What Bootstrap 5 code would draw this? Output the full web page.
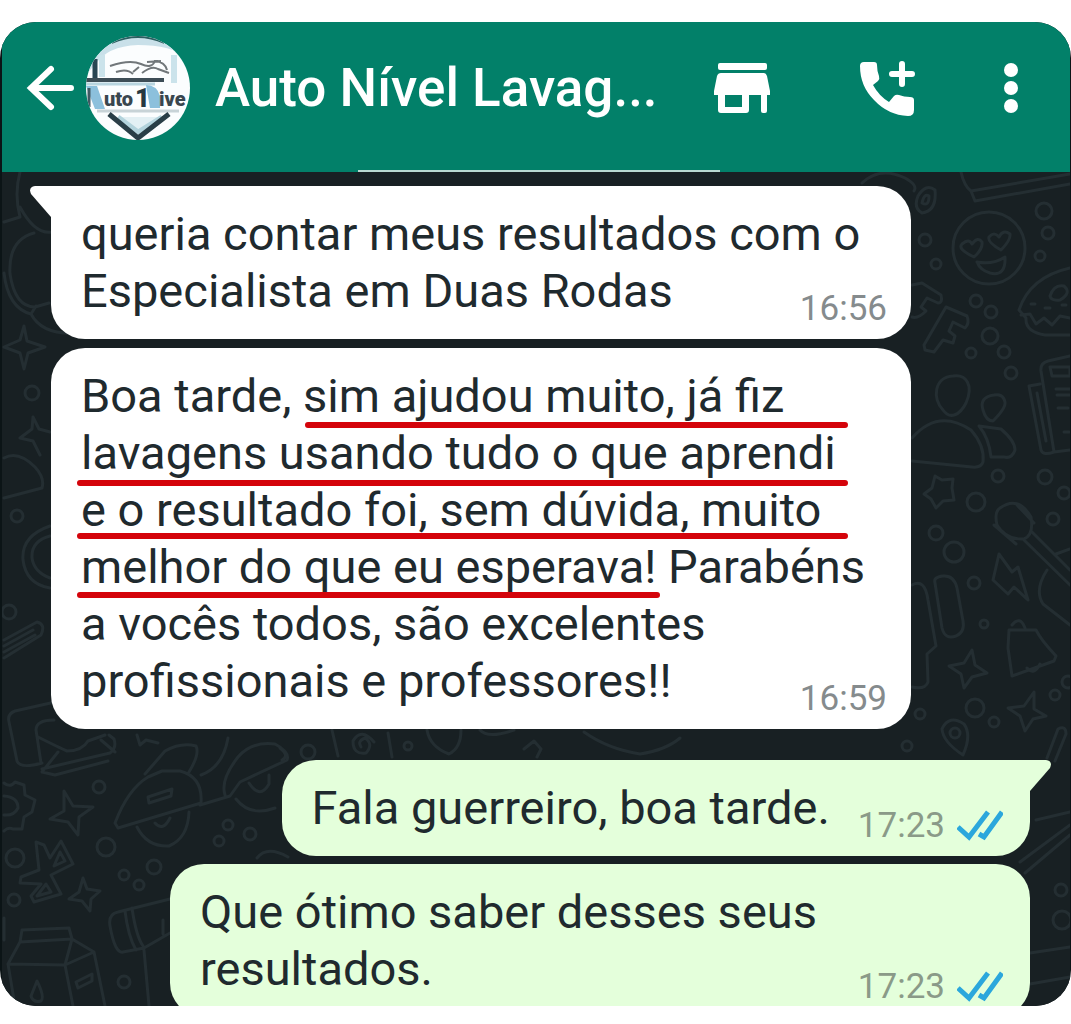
<!DOCTYPE html>
<html lang="pt-BR">
<head>
<meta charset="utf-8">
<meta name="viewport" content="width=device-width, initial-scale=1">
<title>Auto Nível Lavagens</title>
<link href="https://cdn.jsdelivr.net/npm/bootstrap@5.3.0/dist/css/bootstrap.min.css" rel="stylesheet">
<style>
body{background:#fff;font-family:Roboto,"Noto Sans",sans-serif;color:#1f2a2e}
.phone{margin:22px 0 18px;padding:0 1px 0 2px;border-radius:36px;background:#0b1416}
.topbar{height:150px;padding:0 30px 18px 21px;background:#028069;color:#fff}
.topbar .tap{color:#fff;background:none;border:0;padding:0;line-height:0}
.topbar .call{margin-left:87px}
.topbar .more{margin-left:66px}
.contact{font-size:53px;line-height:60px;font-weight:500;margin:0 0 0 24px}
.handle{bottom:-1px;left:356px;width:362px;height:3px;background:#b9d9d1}
.chat{height:834px;background:#182023;padding:14px 40px 0 49px}
.doodles{inset:0;width:100%;height:100%;fill:none;stroke:#242e32;stroke-width:3;stroke-linecap:round;stroke-linejoin:round}
.bubble{position:relative;display:grid;width:860px;max-width:100%;flex-shrink:0;padding:19px 24px 20px 30px;border-radius:34px;background:#fff;font-size:47px;line-height:57px}
.bubble p{margin:0;grid-area:1/1}
.bubble .stamp{grid-area:1/1;align-self:end;justify-self:end}
.bubble.sent{background:#e4ffdb;align-self:flex-end;padding-right:27px}
.bubble.short{width:auto;column-gap:28px;margin-top:31px}
.bubble.short .stamp{grid-area:1/2}
.bubble.long{margin-top:9px}
.bubble.last{margin-top:8px}
.head-in{border-top-left-radius:0}
.head-out{border-top-right-radius:0}
.tail{top:0;width:23px;height:32px}
.tail-in{left:-21px;fill:#fff}
.tail-out{right:-21px;fill:#e4ffdb}
.stamp{display:flex;align-items:center;gap:12px;font-size:35px;line-height:41px;color:#858b8d;margin-bottom:-10px}
.sent .stamp{color:#8a9a88}
.marks{left:0;top:0;width:860px;height:381px;stroke:#d4040b;stroke-width:6;stroke-linecap:round}
</style>
</head>
<body>
<main class="phone overflow-hidden">
<header class="topbar d-flex align-items-center position-relative">
  <button class="tap" aria-label="Voltar"><svg width="54" height="54" viewBox="0 0 54 54" fill="none" stroke="#fff" stroke-width="6" stroke-linecap="round"><path d="M8 27H48M28 8L8 27L28 46"/></svg></button>
  <svg class="ms-2" width="106" height="106" viewBox="0 0 106 106" role="img" aria-label="Auto Nível">
    <defs><clipPath id="face"><circle cx="53" cy="53" r="52"/></clipPath></defs>
    <g clip-path="url(#face)">
      <rect width="106" height="106" fill="#fbfdfe"/>
      <path d="M0 0H106V24Q86 10 53 10Q22 11 10 30L0 40Z" fill="#c9e0e9"/>
      <path d="M26 6Q53-6 80 6" stroke="#2b5f60" stroke-width="6" fill="none"/>
      <path d="M10 24V44" stroke="#294552" stroke-width="5"/><path d="M17 20V42M89 20V48" stroke="#cbe3eb" stroke-width="6"/>
      <path d="M0 45H79" stroke="#3d4d56" stroke-width="4"/><path d="M0 49H70" stroke="#b8d5df" stroke-width="3"/>
      <path d="M25 31Q45 24 56 29T70 26Q80 27 82 35M31 37Q42 33 48 39M54 32L48 37M57 38Q67 30 73 34L84 38M62 27L76 26" fill="none" stroke="#71777a" stroke-width="2"/>
      <path d="M1 51H12L20 74H10Z" fill="#8cc0dc"/><path d="M4 53V72" stroke="#415963" stroke-width="3"/>
      <path d="M61 50Q72 50 75 61V73H65Z" fill="#8cc0dc"/>
      <text x="19" y="71" font-family="Roboto,sans-serif" font-size="20" font-weight="900" fill="#39464e">uto</text>
      <text x="50" y="72" font-family="Roboto,sans-serif" font-size="26" font-weight="900" fill="#263941">1</text>
      <text x="74" y="71" font-family="Roboto,sans-serif" font-size="20" font-weight="900" fill="#39464e">ive</text>
      <path d="M12 76H94" stroke="#c8d3d7" stroke-width="3"/>
      <path d="M33 82L53 97L77 82" fill="#e3f0f4" stroke="#b3d3dc" stroke-width="5"/>
      <path d="M24 79L53 103L84 79" fill="none" stroke="#293e47" stroke-width="5"/>
    </g>
  </svg>
  <h1 class="contact text-nowrap">Auto Nível Lavag...</h1>
  <div class="d-flex align-items-center ms-auto">
    <button class="tap" aria-label="Loja"><svg width="58" height="54" viewBox="0 0 58 54" fill="#fff"><rect x="5" y="2" width="49" height="7" rx="2"/><path fill-rule="evenodd" d="M8 12H51Q53 12 54 15L57 30V34H54V50Q54 52 52 52H50Q48 52 48 50V34H36V49Q36 52 33 52H8Q5 52 5 49V34H1V30L4 15Q5 12 8 12ZM12 34V46H29V34Z"/></svg></button>
    <button class="tap call" aria-label="Ligar"><svg width="58" height="58" viewBox="0 0 58 58"><path d="M6 3H16Q19 3 19 6Q19 12 21 17Q22 20 20 22L15 26Q21 37 31 43L36 37Q38 35 41 36Q46 38 52 38Q56 38 56 41V51Q56 57 50 57Q30 56 16 41Q2 27 2 7Q2 3 6 3Z" fill="#fff"/><path d="M44 5V25M34 15H54" stroke="#fff" stroke-width="6" stroke-linecap="round"/></svg></button>
    <button class="tap more" aria-label="Mais opções"><svg width="58" height="54" viewBox="0 0 58 54" fill="#fff"><circle cx="29" cy="9" r="7"/><circle cx="29" cy="27" r="7"/><circle cx="29" cy="45" r="7"/></svg></button>
  </div>
  <span class="handle position-absolute"></span>
</header>
<section class="chat d-flex flex-column position-relative overflow-hidden">
  <svg class="doodles position-absolute" viewBox="2 172 1068 834" preserveAspectRatio="xMinYMin slice" aria-hidden="true">
    <!-- right-hand side -->
    <path d="M961 172Q964 186 971 191L1070 174M971 191L975 201L1070 184"/>
    <path d="M862 183Q880 166 905 178Q918 185 914 191M918 196Q926 183 935 190Q937 211 922 213Q913 208 918 196ZM922 203Q924 193 929 196Q929 207 922 203Z"/>
    <circle cx="989" cy="248" r="36"/>
    <path d="M974 257Q957 249 962 244Q969 238 972 244Q978 236 982 242Q983 249 974 257ZM1001 250Q987 242 989 237Q994 231 999 237Q1003 229 1010 234Q1011 240 1001 250ZM977 262Q993 265 1005 257Q1006 277 990 273Q980 270 977 262"/>
    <circle cx="925" cy="240" r="6"/><circle cx="936" cy="264" r="5"/><circle cx="1044" cy="211" r="8"/><circle cx="1048" cy="233" r="6"/><circle cx="1040" cy="256" r="5"/>
    <circle cx="976" cy="301" r="6"/><circle cx="991" cy="312" r="6"/><circle cx="990" cy="336" r="8"/><circle cx="971" cy="353" r="5"/><circle cx="1004" cy="352" r="6"/><circle cx="1011" cy="373" r="6"/>
    <path d="M1070 268Q1030 277 1019 310L1026 318Q1025 332 1045 335H1070M1021 315L1030 314L1036 324L1044 318L1052 325L1060 316L1070 318M1050 296Q1054 284 1064 286Q1072 293 1060 300Q1051 301 1050 296ZM1031 304h4M1045 308h5M1062 305h4"/>
    <path d="M912 285L922 283L941 295Q943 303 938 303L927 298L921 307L926 311Q918 319 912 317M946 307L967 316Q970 323 965 328L953 322L949 331L955 336L953 343L943 340L934 352L925 350L924 345Z"/>
    <path d="M953 376C934 377 932 399 943 410C950 420 960 415 966 403C974 385 966 374 953 376ZM994 395Q979 397 983 410Q986 421 993 421Q1006 408 1005 402Q1003 393 994 395ZM912 438Q938 408 971 430Q985 446 983 462Q981 468 972 467L912 461M979 426L1001 429Q1015 441 1015 450Q1012 459 1004 457H991Q989 438 979 426"/>
    <path d="M1070 356L1048 361Q1040 363 1041 371L1054 452L1070 450M1040 384L1029 386L1041 450Q1043 456 1054 452M1037 393L1046 441M1050 367H1070V376H1052ZM1056 389H1070M1057 395H1070M1058 408h10M1064 432h5"/>
    <path d="M935 476L942 480L953 479L952 488L954 500L943 501L936 508L931 499L924 494L932 488ZM1000 508Q1018 495 1031 517Q1034 535 1024 539Q1006 540 997 525Q994 512 1000 508M994 525L1016 544M1017 505L1034 523M1024 540L1070 585M1032 532L1070 570M1047 570Q1034 590 1043 604L1070 625M1056 554L1070 549M999 554L1012 572L1018 567L1028 600L1014 587L1008 594L993 580Z"/>
    <circle cx="998" cy="476" r="6"/><circle cx="1045" cy="477" r="7"/><circle cx="1064" cy="493" r="6"/><circle cx="976" cy="502" r="9"/><circle cx="936" cy="533" r="7"/><circle cx="1053" cy="519" r="6"/><circle cx="954" cy="552" r="10"/><circle cx="974" cy="583" r="6"/><circle cx="984" cy="624" r="4"/>
    <path d="M935 583L942 628Q945 640 956 636Q965 632 963 621L957 588Q954 575 943 576Q933 577 935 583ZM912 585Q925 578 928 600L936 646L927 654L928 682Q925 690 912 687"/>
    <path d="M972 650L975 665L987 673L972 677L964 688L961 674L949 666L964 663ZM1034 692L1034 709L1046 716L1033 719L1025 731L1020 716L1008 708L1024 706ZM1009 630L1036 630Q1041 640 1056 656L1054 661L1012 676L1008 648ZM1027 668Q1034 676 1040 664M1012 625Q1020 615 1025 628"/>
    <circle cx="975" cy="708" r="9"/><circle cx="920" cy="714" r="5"/><circle cx="994" cy="722" r="5"/><circle cx="1055" cy="695" r="5"/><circle cx="907" cy="746" r="5"/><circle cx="955" cy="733" r="5"/><circle cx="1068" cy="682" r="6"/>
    <path d="M963 755Q943 742 942 729Q949 714 964 724Q972 735 963 755M1047 758L1058 729Q1066 725 1066 734L1055 761M1036 820L1070 812M1020 862L1070 825M1025 873L1070 835M1030 953L1070 947M1030 984L1070 977"/>
    <circle cx="1061" cy="890" r="6"/><circle cx="1062" cy="920" r="9"/>
    <!-- left-hand side -->
    <path d="M4 222L20 217Q14 194 20 172M20 207Q35 235 52 232M34 233Q8 240 10 274Q15 307 35 307L49 303M4 273Q8 308 31 314L36 306M31 314Q42 335 76 333M24 326L27 341L45 347L28 353L24 369L20 353L4 347L20 340ZM33 417L39 429L50 432M33 417L32 429L20 438L33 441L40 455"/>
    <circle cx="32" cy="393" r="7"/><circle cx="17" cy="516" r="6"/><circle cx="9" cy="612" r="7"/>
    <path d="M4 458Q18 450 35 467Q45 478 42 488L4 498M50 526Q21 536 23 560Q26 584 50 588M50 536Q31 541 32 558Q34 572 50 578M4 640L37 622Q46 624 41 635L4 658M4 646L33 630M4 652L35 635"/>
    <path d="M55 702L15 711Q7 714 9 722L17 761Q20 769 42 763M41 763L36 730Q36 720 54 720M38 737Q60 748 67 751Q82 751 88 741L105 735M42 769L110 753Q117 748 114 739L109 735M58 752L42 772L55 775L108 761M101 740L115 752M137 735L140 745L146 740L158 743"/>
    <path d="M4 783Q10 788 15 782L24 785L25 795L35 800L32 812L24 817L22 829L13 829Q8 827 4 831M4 796Q18 797 18 808Q14 816 4 815M64 791L73 806L93 807L79 817L78 835L68 822L50 819L64 811ZM36 842L44 845L50 858L61 841L73 864L51 875L61 894L34 902L31 896L41 884L20 883L21 877L39 870Z"/>
    <circle cx="99" cy="787" r="6"/><circle cx="106" cy="847" r="9"/><circle cx="15" cy="858" r="9"/><circle cx="14" cy="900" r="6"/><circle cx="124" cy="875" r="5"/><circle cx="154" cy="867" r="7"/><circle cx="139" cy="885" r="5"/><circle cx="228" cy="825" r="5"/><circle cx="250" cy="834" r="6"/><circle cx="219" cy="841" r="5"/><circle cx="124" cy="982" r="6"/>
    <path d="M115 823Q128 789 148 777L162 771H180Q203 777 201 803L118 828ZM145 774L165 751Q181 742 196 746Q200 754 189 772M201 775Q223 767 228 738M225 795Q220 780 238 757Q252 741 275 744Q290 752 287 760L240 782L230 796L200 805M137 827Q147 847 169 846Q188 838 189 812M155 823Q163 832 170 818M236 799Q250 817 275 808M249 783Q260 800 269 784V775M148 797L172 789L171 796L149 803ZM60 852L65 861L54 866ZM46 884L51 892L37 896Z"/>
    <path d="M83 878L87 889L100 891L91 899L90 911L82 901L69 899L79 892ZM22 930L69 928L72 939L20 942ZM20 942L8 964L65 965L94 952L72 939L65 965L73 1006M94 952L105 1006M8 964L15 1006M37 981L31 996Q33 1003 41 1001Q45 997 37 981ZM76 982L92 974L92 981L78 988ZM170 899L118 912Q108 914 110 926Q115 954 123 952L144 948L170 933M125 911Q128 936 136 950M132 908Q136 936 143 946M144 950L149 1006M163 920V934M257 858Q267 845 288 857M4 918V940"/>
    <!-- strip between the bubbles -->
    <path d="M280 748Q290 756 282 760M332 730L338 756M388 733L392 757M374 742Q361 727 353 741Q353 755 366 753Q374 744 365 738Q357 741 361 747M427 730Q430 747 449 754Q461 748 461 730M480 730Q488 739 514 730M584 732Q608 749 640 754Q666 750 680 738M524 749L534 741L541 749L537 757"/>
    <circle cx="308" cy="752" r="7"/><circle cx="408" cy="746" r="4"/>
  </svg>

  <article class="bubble head-in">
    <svg class="tail tail-in position-absolute" viewBox="0 0 23 32" aria-hidden="true"><path d="M23 0H5Q-2 1 1 8L21 31H23Z"/></svg>
    <p>queria contar meus resultados com o<br>Especialista em Duas Rodas</p>
    <time class="stamp">16:56</time>
  </article>

  <article class="bubble long">
    <p>Boa tarde, sim ajudou muito, já fiz<br>lavagens usando tudo o que aprendi<br>e o resultado foi, sem dúvida, muito<br>melhor do que eu esperava! Parabéns<br>a vocês todos, são excelentes<br>profissionais e professores!!</p>
    <svg class="marks position-absolute" viewBox="0 0 860 381" aria-hidden="true"><path d="M257 77H794M29 135H794M29 188H794M29 247H606"/></svg>
    <time class="stamp">16:59</time>
  </article>

  <article class="bubble sent short head-out">
    <svg class="tail tail-out position-absolute" viewBox="0 0 23 32" aria-hidden="true"><path d="M0 0H18Q25 1 22 8L2 31H0Z"/></svg>
    <p>Fala guerreiro, boa tarde.</p>
    <div class="stamp"><time>17:23</time><svg width="46" height="32" viewBox="0 0 46 32" fill="none" stroke="#2ba7dc" stroke-width="5" role="img" aria-label="Lida"><path d="M1 17L12 27L31 2M22 24L27 27L45 2"/></svg></div>
  </article>

  <article class="bubble sent last">
    <p>Que ótimo saber desses seus<br>resultados.</p>
    <div class="stamp"><time>17:23</time><svg width="46" height="32" viewBox="0 0 46 32" fill="none" stroke="#2ba7dc" stroke-width="5" role="img" aria-label="Lida"><path d="M1 17L12 27L31 2M22 24L27 27L45 2"/></svg></div>
  </article>
</section>
</main>
<script src="https://cdn.jsdelivr.net/npm/bootstrap@5.3.0/dist/js/bootstrap.bundle.min.js"></script>
</body>
</html>
